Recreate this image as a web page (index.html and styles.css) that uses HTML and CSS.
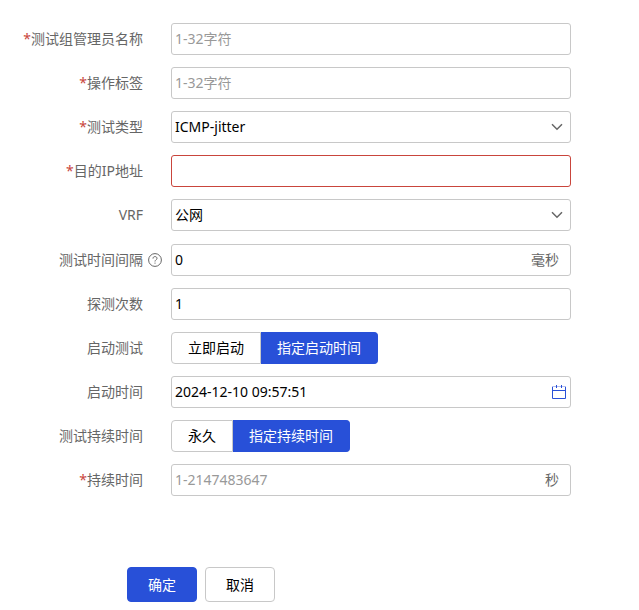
FILE: index.html
```html
<!DOCTYPE html>
<html lang="zh-CN">
<head>
<meta charset="utf-8">
<meta name="viewport" content="width=device-width, initial-scale=1">
<title>启动测试</title>
<link rel="stylesheet" href="styles.css">
</head>
<body>
<form class="form">
  <div class="row">
    <label class="label" for="admin"><span class="required">*</span>测试组管理员名称</label>
    <div class="field"><input class="control" id="admin" type="text" placeholder="1-32字符"></div>
  </div>
  <div class="row">
    <label class="label" for="tag"><span class="required">*</span>操作标签</label>
    <div class="field"><input class="control" id="tag" type="text" placeholder="1-32字符"></div>
  </div>
  <div class="row">
    <label class="label" for="type"><span class="required">*</span>测试类型</label>
    <div class="field">
      <select class="control" id="type"><option>ICMP-jitter</option></select>
      <svg class="chevron" viewBox="0 0 12 8" aria-hidden="true"><path d="M1 1.2 6 6.2 11 1.2"/></svg>
    </div>
  </div>
  <div class="row">
    <label class="label" for="ip"><span class="required">*</span>目的IP地址</label>
    <div class="field"><input class="control control-error" id="ip" type="text"></div>
  </div>
  <div class="row">
    <label class="label" for="vrf">VRF</label>
    <div class="field">
      <select class="control" id="vrf"><option>公网</option></select>
      <svg class="chevron" viewBox="0 0 12 8" aria-hidden="true"><path d="M1 1.2 6 6.2 11 1.2"/></svg>
    </div>
  </div>
  <div class="row row-help">
    <label class="label" for="interval">测试时间间隔</label>
    <svg class="help" viewBox="0 0 14 14" aria-hidden="true"><circle cx="7" cy="7" r="6.4"/><path d="M5 5.6C5 4.2 5.8 3.6 7 3.6S9 4.3 9 5.4C9 6.7 7 6.9 7 8.5M7 9.6v1.1"/></svg>
    <div class="field">
      <input class="control" id="interval" type="text" value="0">
      <span class="unit">毫秒</span>
    </div>
  </div>
  <div class="row">
    <label class="label" for="count">探测次数</label>
    <div class="field"><input class="control" id="count" type="text" value="1"></div>
  </div>
  <div class="row" role="radiogroup" aria-labelledby="start-mode">
    <span class="label" id="start-mode">启动测试</span>
    <div class="segments">
      <label class="segment"><input type="radio" name="start">立即启动</label>
      <label class="segment"><input type="radio" name="start" checked>指定启动时间</label>
    </div>
  </div>
  <div class="row">
    <label class="label" for="start-time">启动时间</label>
    <div class="field">
      <input class="control" id="start-time" type="text" value="2024-12-10 09:57:51">
      <svg class="calendar" viewBox="0 0 14 14" aria-hidden="true"><path class="calendar-top" d="M0 1.5h14"/><path d="M4.5 0v3M9.5 0v3M.5 2v11.5h13V2M.5 5.5h13"/></svg>
    </div>
  </div>
  <div class="row" role="radiogroup" aria-labelledby="duration-mode">
    <span class="label" id="duration-mode">测试持续时间</span>
    <div class="segments">
      <label class="segment"><input type="radio" name="duration">永久</label>
      <label class="segment"><input type="radio" name="duration" checked>指定持续时间</label>
    </div>
  </div>
  <div class="row">
    <label class="label" for="duration"><span class="required">*</span>持续时间</label>
    <div class="field">
      <input class="control" id="duration" type="text" placeholder="1-2147483647">
      <span class="unit">秒</span>
    </div>
  </div>
  <div class="actions">
    <button class="button button-primary" type="button">确定</button>
    <button class="button" type="button">取消</button>
  </div>
</form>
</body>
</html>
```
FILE: styles.css
```css
* {
  box-sizing: border-box;
}

body {
  margin: 0;
  background: #fff;
  color: #000;
  font: 14px/20px "Noto Sans", "Noto Sans CJK SC", sans-serif;
}

input,
select,
button {
  font: inherit;
  color: inherit;
}

.form {
  display: flex;
  flex-direction: column;
  gap: 12px;
  padding: 23px 68px 8px 0;
}

.row {
  display: grid;
  grid-template-columns: 143px 28px minmax(0, 1fr);
  align-items: center;
  min-height: 32px;
}

.row-help .field {
  margin-top: 1px;
}

.label {
  grid-column: 1;
  text-align: right;
  color: #666;
}

.required {
  color: #c9453c;
}

.help {
  grid-column: 2;
  width: 14px;
  height: 14px;
  margin-left: 5px;
  fill: none;
  stroke: #666;
  stroke-width: 1;
}

.field {
  grid-column: 3;
  position: relative;
  display: flex;
}

.control {
  appearance: none;
  width: 100%;
  height: 32px;
  margin: 0;
  padding: 0 3px;
  border: 1px solid #c8c8c8;
  border-radius: 3px;
  background: #fff;
  outline: none;
}

input.control {
  padding-bottom: 2px;
}

.control::placeholder {
  color: #999;
  opacity: 1;
}

.control-error {
  border-color: #c9453c;
}

.chevron,
.calendar,
.unit {
  position: absolute;
  pointer-events: none;
}

.chevron {
  top: 12px;
  right: 8px;
  width: 12px;
  height: 8px;
  fill: none;
  stroke: #666;
  stroke-width: 1.5;
}

.calendar {
  top: 9px;
  right: 5px;
  width: 14px;
  height: 14px;
  fill: none;
  stroke: #2850d8;
}

.calendar-top {
  stroke: #b4bfee;
}

.unit {
  top: 6px;
  right: 12px;
  color: #666;
}

.segments {
  grid-column: 3;
  display: flex;
}

.segment {
  display: flex;
  align-items: center;
  height: 32px;
  padding: 0 16px;
  border: 1px solid #c8c8c8;
  border-radius: 4px 0 0 4px;
  white-space: nowrap;
}

.segment input {
  appearance: none;
  position: absolute;
  margin: 0;
}

.segment:has(input:checked) {
  border-color: #2850d8;
  border-left: 0;
  border-radius: 0 4px 4px 0;
  background: #2850d8;
  color: #fff;
}

.actions {
  display: flex;
  gap: 8px;
  margin-top: 59px;
  padding-left: 127px;
}

.button {
  width: 70px;
  height: 35px;
  padding: 0;
  border: 1px solid #c8c8c8;
  border-radius: 4px;
  background: #fff;
}

.button-primary {
  border-color: #2850d8;
  background: #2850d8;
  color: #fff;
}
```
